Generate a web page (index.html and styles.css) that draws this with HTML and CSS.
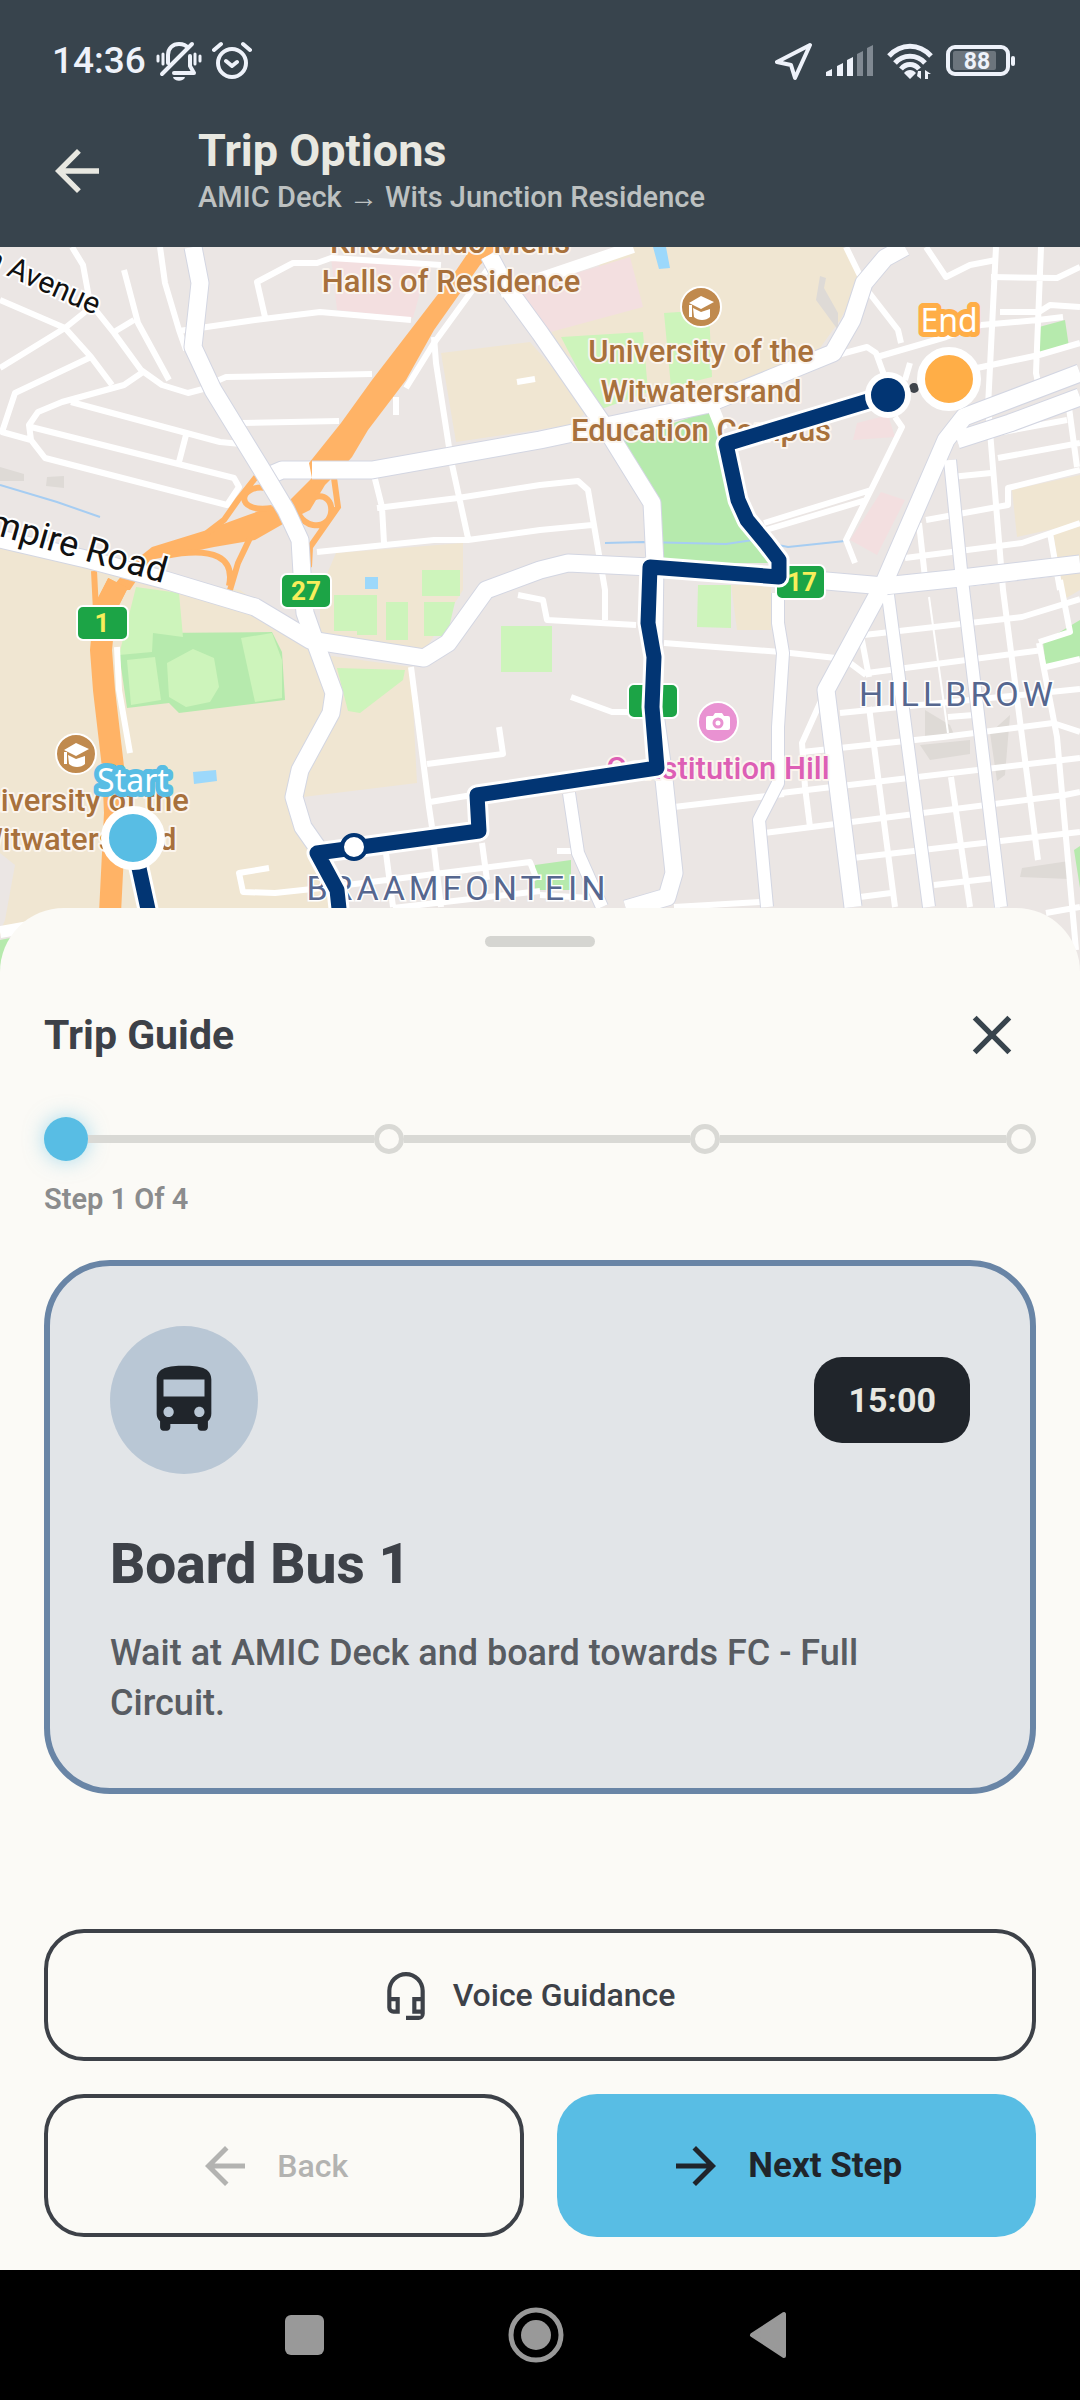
FILE: index.html
```html
<!DOCTYPE html>
<html lang="en">
<head>
    <meta charset="UTF-8">
    <meta name="viewport" content="width=device-width, initial-scale=1.0">
    <title>Trip Options</title>
    <link rel="stylesheet" href="styles.css">
</head>
<body>
    <header class="header">
        <div class="status-bar">
            <div class="status-group">
                <span class="clock">14:36</span>
                <svg class="status-icon" width="46" height="40" viewBox="0 0 46 40" fill="none" stroke="#eef2fa" stroke-width="4" stroke-linecap="round" stroke-linejoin="round">
                    <path d="M12 22V14C12 7 17 3 23 3c4 0 7 1 9 4M6 33L36 3M18 32h20l-4-7V15"/>
                    <path d="M2 15v5M7 13v10M39 13v10M44 15v5" stroke-width="3"/>
                    <path d="M17 36h12c-1 5-11 5-12 0z" fill="#eef2fa" stroke="none"/>
                </svg>
                <svg class="status-icon" width="40" height="40" viewBox="0 0 40 40" fill="none" stroke="#eef2fa" stroke-width="4" stroke-linecap="round" stroke-linejoin="round">
                    <circle cx="20" cy="22" r="14"/>
                    <path d="M14 20l6 5 5-4M2 9l7-6M38 9l-7-6"/>
                </svg>
            </div>
            <div class="status-group right">
                <svg width="38" height="40" viewBox="0 0 38 40" fill="none" stroke="#eef2fa" stroke-width="4" stroke-linejoin="round">
                    <path d="M35 4L2 21l14 3 4 13z"/>
                </svg>
                <svg width="48" height="40" viewBox="0 0 48 40" fill="#eef2fa">
                    <path d="M0 35v-4l6-3v7zM11 35V25l6-3v13zM21 35V19l6-3v19z"/>
                    <path d="M31 35V13l6-3v25zM41 35V7l6-3v31z" opacity=".4"/>
                </svg>
                <svg width="46" height="40" viewBox="0 0 46 40" fill="none" stroke="#eef2fa" stroke-width="5">
                    <path d="M2 15c12-13 30-13 42 0M8 22c8-9 22-9 30 0M14 28c5-6 13-6 18 0"/>
                    <path d="M17 32c3-4 9-4 12 0l-6 6zM31 30h3v8l-4-3zM38 38v-9l6 4h-3v5z" fill="#eef2fa" stroke="none"/>
                </svg>
                <svg class="battery" width="70" height="32" viewBox="0 0 70 32">
                    <rect x="2" y="2" width="60" height="27" rx="7" fill="none" stroke="#eef2fa" stroke-width="4"/>
                    <rect x="7" y="6" width="43" height="19" rx="2" fill="#6c757d"/>
                    <rect x="65" y="11" width="4" height="10" rx="2" fill="#eef2fa"/>
                    <text x="31" y="24" class="battery-level">88</text>
                </svg>
            </div>
        </div>
        <div class="app-bar">
            <button class="icon-button" type="button" aria-label="Go back">
                <svg width="66" height="66" viewBox="0 0 24 24" fill="#e8e8e1"><path d="M20 11H7.8l5.6-5.6L12 4l-8 8 8 8 1.4-1.4L7.8 13H20z"/></svg>
            </button>
            <div>
                <h1 class="title">Trip Options</h1>
                <p class="subtitle">AMIC Deck → Wits Junction Residence</p>
            </div>
        </div>
    </header>

    <main class="content">
        <section class="map" aria-label="Route map">
            <svg class="map-canvas" viewBox="0 247 1080 725" preserveAspectRatio="xMidYMin slice">
                <!-- land use -->
                <g class="campus">
                    <path d="M0 547l90 21 150 22 70 50 24 55-6 20-34 60 0 30 24 50 20 60v20H0z"/>
                    <path d="M325 655l86 12 6 116-114 14zM336 553l127-10v47l-38 60-105-10v-50zM441 353l89-11 60 68-20 15-114 17z"/>
                    <path d="M609 252l16-5h218l19 33-22 40-25 35-70 25-100 22-100-60zM1012 490l68-15v48l-63 14zM1053 530l27-10v70l-17 10zM731 585h40v45h-34z"/>
                </g>
                <path class="land" d="M0 853l15 12-10 55-5 12z"/>
                <g class="hospital">
                    <path d="M331 257l96 10-14 51-76-8zM520 290l110-33 13 50-96 26zM857 423l31-8 7 22-42 3zM881 492l24 8-28 55-27-15z"/>
                </g>
                <g class="pitch">
                    <path d="M561 337l82-5 5 60-49 18zM664 313l45-3 3 67-41 10zM698 585h33l0 43-34-1zM501 626h51v46h-51z"/>
                </g>
                <g class="park">
                    <path d="M624 440l88-30 7 37 28 76 27 40H664l-4-46zM1039 327l26-7 4 27-31 10zM1043 642l37-22v40l-34 7zM1074 850l6-4v42zM535 865l36-5v30h-36zM0 940l30-6v50H0z"/>
                    <path d="M119 653l33-6v-14l120-1 10 20 3 48-106 13-10-10-42 5z"/>
                </g>
                <g class="pitch">
                    <path d="M136 587l43 6 4 44-30-4-1 19-33 3zM127 660l28-3 6 43-30 5zM167 663l26-14 21 9 5 29-9 15-24 5-17-10zM241 638l31-5 10 27v38l-27 4z"/>
                    <path d="M334 595h43v40h-20v-4h-23zM386 602h22v38h-22zM422 570h38v26h-38zM424 602h31l-8 34h-23zM337 668l68 2-2 10-43 33-12-2z"/>
                </g>
                <g class="water">
                    <path d="M653 247h13l4 21-11 1zM365 577h13v12h-13zM193 772l23-2 1 11-23 3z"/>
                    <path class="stream" d="M0 485l57 17 43 15M605 543l38-1 83 2 27-4 35 7 57-6"/>
                </g>
                <g class="building">
                    <path d="M0 467l24 7v7H0zM47 477l17-1v12l-18-2zM820 276l6 2-2 10 14 25v17l-22-30zM925 710l25 15 5 12-30 4zM990 733l20-18-5 60-8 6zM920 745l50-5v14l-40 6zM1022 868l47-7v18l-49-2z"/>
                </g>

                <!-- side streets -->
                <g class="street">
                    <path d="M0 300l65 28 26 29 21 28M0 368l65-40 20-16M72 247l11 18 7 38 24 30 27 37 21 15 26 8 19-5M114 332l20-12M124 270l14 53 31 57M160 247l5 36 14 47 7 20"/>
                    <path d="M179 331l76-11 65-8 91 8M265 317l-8-35 36-19h24l14-5 110 7M143 372l-19 13-62 17-24 10-9 13 2 15 14 18 182 47 12-18-5-9-203-51M71 402l149 40 21 2M186 435l-7 27M91 357l-76 36-13 39 29 8"/>
                    <path d="M203 387l23-10 146-3M241 423l98-2M396 397v18M434 337l2 26 15 97 17 78M317 552l117-12h34l72-10 52-5M374 475l8 32 2 36M377 508l81-10 82-13 38-4 10 9 17 100v30M517 382l18-3M518 595l25 5 4 20 89 5"/>
                    <path d="M411 667l18 140 3 20M427 764l76-10-4-27M430 802l42-7M269 868l-30 5 4 19 32 1 56-6 199-25 7 18M386 853l7 54M434 847l7 60M482 843l5 37M571 697l41 15h18M393 908l147-17M557 851h17M540 895l50 3M674 907l86-5"/>
                    <path d="M664 643l117 9 55 6M674 807l110-13M840 713l240-24M802 752l141-15 110-14 27 9M781 793l299-35M764 833l301-38 15-3M853 858l227-26M934 885l61-7M860 897l31-4M948 717l26-2M864 635l158-18 58-18M867 673l176-23M1046 667l34-8"/>
                    <path d="M860 630l9 47M869 707l26 200M951 777l19 130M996 247l-8 160 15 183 35 270M1039 643l18 94 19 213M1060 580l10 52-31 10M829 683l-27 60 3 44 5 40M846 660l20 15M1046 913l34-6M995 878l2 30"/>
                    <path d="M926 247l20 30 24-12 26-5M1041 247l-5 126 3 14M991 277l66 1 23-11M1000 312h39l11-7 30 2M981 325l57-5 25-3M977 368l62-13 41-12M846 247l21 43 31 40 3 13M877 357l69-20 35-12M819 360l48-13 9 6 8 22M910 363l-5 17"/>
                    <path d="M895 417l7 10-31 63-25 50 9 23M764 523l107-33M766 530l100-30M951 477l40-4M998 458l82-15M960 440l107-20M926 520l82-15v-17l72-18M905 558l117-15 58-20M957 585l100-12M919 523l7 64M1050 533l10 57M1067 393l10 74"/>
                    <path class="lane" d="M929 597l19 136"/>
                </g>

                <!-- motorway -->
                <g class="main-road">
                    <path class="edge" d="M268 476l14-6h36"/>
                    <path d="M268 476l14-6h36"/>
                </g>
                <path class="edge-white" d="M117 647l2 43 11 63M498 255l-64 88-28 45"/>
                <path class="motorway" d="M472 247l-17 25-83 108-31 43-32 40 3 15-22 22-42 15-41 15-55 17-20 16-22 27h20l20-30 25-5 39-8 41-7 35-20 20-10 15-25 20-20 7-8 16-27 38-50 28-50 46-65 18-18z"/>
                <path class="motorway-line" d="M118 583l-13 25-4 42 3 40 9 77 2 46-5 100"/>
                <path class="ramp" d="M256 477l-18 23-14 20-17 13M266 488c-28-4-32 26 6 20M334 478l4 29-28 40-1 20M315 497c22-6 22 32-2 28-6-1-10-4-14-10M250 538l-12 25-8 27M165 556c50-10 70 2 64 30M94 571l2 40"/>

                <!-- main roads -->
                <g class="main-road">
                    <path class="edge" d="M193 247l7 36-7 64 20 43 49 80 24 40 14 30 3 50 2 23 12 34 17 46-3 20-31 57-6 27 9 30 14 20M312 470h60l168-30 165-35 69-28 59-24 19-33 12-37 21-25 20-11"/>
                    <path class="edge" d="M489 255l16 30 35 48 65 94 47 76 3 60-2 137 10 70 11 103-7 24-41 12M0 539l90 21 75 20 90 27 55 33 114 18 24-15 38-53 54-20 28-7 82 4 130 10 104 9 86-9 110-13"/>
                    <path class="edge" d="M1080 373l-116 44-18 23-62 143-58 107 27 217M957 440l53-17 70-26"/>
                    <path class="edge narrow" d="M778 593v30l5 30-5 74v56l-19 37 8 87M569 793l9 60 24 54M888 595l41 312M950 460l12 120 39 327"/>
                    <path d="M193 247l7 36-7 64 20 43 49 80 24 40 14 30 3 50 2 23 12 34 17 46-3 20-31 57-6 27 9 30 14 20M312 470h60l168-30 165-35 69-28 59-24 19-33 12-37 21-25 20-11"/>
                    <path d="M489 255l16 30 35 48 65 94 47 76 3 60-2 137 10 70 11 103-7 24-41 12M0 539l90 21 75 20 90 27 55 33 114 18 24-15 38-53 54-20 28-7 82 4 130 10 104 9 86-9 110-13"/>
                    <path d="M1080 373l-116 44-18 23-62 143-58 107 27 217M957 440l53-17 70-26"/>
                    <path class="narrow" d="M778 593v30l5 30-5 74v56l-19 37 8 87M569 793l9 60 24 54M888 595l41 312M950 460l12 120 39 327M500 292l133-45M0 932l40-7M712 405l10 25"/>
                </g>
                <path class="motorway-line" d="M118 583l-12 24"/>

                <!-- road shields -->
                <g class="shield">
                    <rect x="77" y="606" width="51" height="34" rx="6"/>
                    <rect x="281" y="574" width="50" height="34" rx="6"/>
                    <rect x="776" y="565" width="49" height="34" rx="6"/>
                    <rect x="628" y="684" width="50" height="34" rx="6"/>
                </g>
                <g class="shield-text">
                    <text x="102" y="632">1</text>
                    <text x="306" y="600">27</text>
                    <text x="802" y="591">17</text>
                </g>

                <!-- places -->
                <g class="place">
                    <text x="450" y="253">Knockando Mens</text>
                    <text x="451" y="292">Halls of Residence</text>
                    <text x="701" y="362">University of the</text>
                    <text x="701" y="402">Witwatersrand</text>
                    <text x="701" y="441">Education Campus</text>
                    <text x="76" y="811">University of the</text>
                    <text x="76" y="850">Witwatersrand</text>
                    <text class="attraction" x="718" y="779">Constitution Hill</text>
                </g>
                <g class="suburb">
                    <text x="958" y="706">HILLBROW</text>
                    <text x="458" y="900">BRAAMFONTEIN</text>
                </g>
                <text class="road-name" transform="translate(163 583) rotate(16)">Empire Road</text>
                <text class="road-name small" transform="translate(95 315) rotate(24)">Jan Avenue</text>

                <g class="poi">
                    <circle cx="701" cy="307" r="20"/>
                    <circle cx="76" cy="754" r="20"/>
                    <circle class="attraction" cx="718" cy="722" r="20"/>
                    <path d="M689 303l12-7 13 6-13 7zM693 308l8 4 9-3v8c-4 4-12 4-16 0zM689 305h3v12h-3z"/>
                    <path d="M64 750l12-7 13 6-13 7zM68 755l8 4 9-3v8c-4 4-12 4-16 0zM64 752h3v12h-3z"/>
                    <path d="M708 716h5l2-3h7l2 3h4q2 0 2 2v10q0 2-2 2h-20q-2 0-2-2v-10q0-2 2-2z"/>
                    <circle class="lens" cx="718" cy="723" r="4"/>
                </g>

                <!-- route -->
                <circle cx="914" cy="388" r="5" fill="#3f444b"/>
                <path class="route-edge" d="M133 838l6 30 12 55M340 918l-3-28-20-37 162-22-2-36 180-27-5-61 2-50-6-34 2-56 129 10v-17l-13-17-19-23-9-20-12-56 162-49"/>
                <path class="route" d="M133 838l6 30 12 55M340 918l-3-28-20-37 162-22-2-36 180-27-5-61 2-50-6-34 2-56 129 10v-17l-13-17-19-23-9-20-12-56 162-49"/>
                <circle cx="354" cy="847" r="12" fill="#fff" stroke="#023573" stroke-width="4"/>
                <circle cx="888" cy="395" r="20" fill="#023573" stroke="#fff" stroke-width="6"/>
                <circle cx="133" cy="838" r="28" fill="#58bde4" stroke="#fff" stroke-width="8"/>
                <circle cx="949" cy="379" r="28" fill="#ffae47" stroke="#fff" stroke-width="8"/>
                <text class="pin-label start" x="133" y="792">Start</text>
                <text class="pin-label end" x="949" y="332">End</text>
            </svg>
        </section>

        <section class="sheet">
            <div class="handle"></div>
            <div class="sheet-header">
                <h2 class="sheet-title">Trip Guide</h2>
                <button class="icon-button" type="button" aria-label="Close">
                    <svg width="66" height="66" viewBox="0 0 24 24" fill="#38444d"><path d="M19 6.4L17.6 5 12 10.6 6.4 5 5 6.4l5.6 5.6L5 17.6 6.4 19l5.6-5.6 5.6 5.6 1.4-1.4-5.6-5.6z"/></svg>
                </button>
            </div>

            <div class="progress">
                <span class="dot active"></span>
                <span class="line"></span>
                <span class="dot"></span>
                <span class="line"></span>
                <span class="dot"></span>
                <span class="line"></span>
                <span class="dot"></span>
            </div>
            <p class="step-count">Step 1 Of 4</p>

            <article class="card">
                <div class="card-top">
                    <div class="card-icon">
                        <svg width="82" height="82" viewBox="0 0 24 24" fill="#20252b"><path d="M4 16c0 .88.39 1.67 1 2.22V20c0 .55.45 1 1 1h1c.55 0 1-.45 1-1v-1h8v1c0 .55.45 1 1 1h1c.55 0 1-.45 1-1v-1.78c.61-.55 1-1.34 1-2.22V6c0-3.5-3.58-4-8-4s-8 .5-8 4v10zm3.5 1c-.83 0-1.5-.67-1.5-1.5S6.67 14 7.5 14s1.5.67 1.5 1.5S8.33 17 7.5 17zm9 0c-.83 0-1.5-.67-1.5-1.5s.67-1.5 1.5-1.5 1.5.67 1.5 1.5-.67 1.5-1.5 1.5zm1.5-6H6V6h12v5z"/></svg>
                    </div>
                    <time class="time">15:00</time>
                </div>
                <h3 class="card-title">Board Bus 1</h3>
                <p class="card-text">Wait at AMIC Deck and board towards FC - Full Circuit.</p>
            </article>

            <div class="actions">
                <button class="button voice" type="button">
                    <svg width="50" height="50" viewBox="0 0 24 24" fill="#3d4148"><path d="M12 1a9 9 0 0 0-9 9v8a3 3 0 0 0 3 3h3v-8H5v-3a7 7 0 0 1 14 0v3h-4v8h4v1h-7v2h6a3 3 0 0 0 3-3V10a9 9 0 0 0-9-9zM7 15v4H6a1 1 0 0 1-1-1v-3zm12 4h-2v-4h2z"/></svg>
                    Voice Guidance
                </button>
                <button class="button back" type="button" disabled>
                    <svg width="60" height="60" viewBox="0 0 24 24" fill="#b3b3b1"><path d="M20 11H7.8l5.6-5.6L12 4l-8 8 8 8 1.4-1.4L7.8 13H20z"/></svg>
                    Back
                </button>
                <button class="button next" type="button">
                    <svg width="60" height="60" viewBox="0 0 24 24" fill="#20252b"><path d="M12 4l-1.4 1.4 5.6 5.6H4v2h12.2l-5.6 5.6L12 20l8-8z"/></svg>
                    Next Step
                </button>
            </div>
        </section>
    </main>

    <nav class="nav-bar" aria-label="System">
        <button class="nav-button" type="button" aria-label="Recent apps">
            <svg width="60" height="60" viewBox="0 0 60 60"><rect x="11" y="10" width="39" height="40" rx="6" fill="#999"/></svg>
        </button>
        <button class="nav-button" type="button" aria-label="Home">
            <svg width="60" height="60" viewBox="0 0 60 60"><circle cx="30" cy="30" r="25" fill="none" stroke="#999" stroke-width="5"/><circle cx="30" cy="30" r="15" fill="#999"/></svg>
        </button>
        <button class="nav-button" type="button" aria-label="Back">
            <svg width="60" height="60" viewBox="0 0 60 60"><path d="M14 30l32-21v42z" fill="#999" stroke="#999" stroke-width="4" stroke-linejoin="round"/></svg>
        </button>
    </nav>
</body>
</html>
```
FILE: styles.css
```css
* {
    box-sizing: border-box;
}
body {
    display: flex;
    flex-direction: column;
    min-height: 100vh;
    margin: 0;
    font-family: Roboto, sans-serif;
    background-color: #fbfaf6;
    color: #3d4148;
}
h1, h2, h3, p {
    margin: 0;
}
button {
    font-family: inherit;
    cursor: pointer;
}
svg {
    display: block;
}

/* Header */
.header {
    background-color: #38444d;
    color: #e8e8e1;
    padding-bottom: 30px;
}
.status-bar {
    display: flex;
    justify-content: space-between;
    padding: 40px 64px 0 52px;
}
.status-group {
    display: flex;
    align-items: center;
    gap: 10px;
    height: 42px;
}
.status-group.right {
    gap: 13px;
}
.clock {
    font-size: 37px;
    line-height: 44px;
    font-weight: 500;
    color: #eef2fa;
}
.battery-level {
    font-size: 23px;
    font-weight: 700;
    fill: #eef2fa;
    text-anchor: middle;
}
.app-bar {
    display: flex;
    align-items: center;
    gap: 88px;
    padding: 43px 44px 0;
}
.icon-button {
    padding: 0;
    border: none;
    background: none;
}
.title {
    font-size: 45px;
    line-height: 52px;
    font-weight: 700;
}
.subtitle {
    font-size: 29px;
    line-height: 40px;
    font-weight: 500;
    color: #bdc1c1;
}

/* Map */
.content {
    display: flex;
    flex-direction: column;
    flex: 1;
}
.map {
    background-color: #ebe6e4;
}
.map-canvas {
    width: 100%;
}
.land {
    fill: #ebe6e4;
}
.campus {
    fill: #f0e6d2;
}
.hospital {
    fill: #f3dfe0;
}
.pitch {
    fill: #cdf4bb;
}
.park {
    fill: #b6eaad;
}
.water {
    fill: #9cd8fb;
}
.stream {
    fill: none;
    stroke: #a6cdf2;
    stroke-width: 2;
}
.building {
    fill: #dedad6;
}
.street {
    fill: none;
    stroke: #fff;
    stroke-width: 6;
    stroke-linejoin: round;
}
.street .lane {
    stroke-width: 2;
}
.main-road {
    fill: none;
    stroke: #fff;
    stroke-width: 17;
    stroke-linejoin: round;
}
.main-road .edge {
    stroke: #d3d6e2;
    stroke-width: 19;
}
.main-road .narrow {
    stroke-width: 12;
}
.main-road .edge.narrow {
    stroke-width: 14;
}
.edge-white {
    fill: none;
    stroke: #fff;
    stroke-width: 6;
}
.motorway {
    fill: #ffb366;
}
.motorway-line {
    fill: none;
    stroke: #ffb366;
    stroke-width: 22;
    stroke-linejoin: round;
}
.ramp {
    fill: none;
    stroke: #ffb366;
    stroke-width: 6;
}
.shield {
    fill: #1ca446;
    stroke: #fff;
    stroke-width: 2;
}
.shield-text {
    font-size: 26px;
    font-weight: 700;
    fill: #f7ee5b;
    text-anchor: middle;
}
.place {
    font-size: 31px;
    font-weight: 500;
    fill: #a8713c;
    stroke: #fbf5ee;
    stroke-width: 4;
    stroke-linejoin: round;
    paint-order: stroke;
    text-anchor: middle;
}
.place .attraction {
    fill: #dd5fb5;
}
.suburb {
    font-size: 34px;
    letter-spacing: 4px;
    fill: #56678f;
    stroke: #fff;
    stroke-width: 3;
    paint-order: stroke;
    text-anchor: middle;
}
.road-name {
    font-size: 36px;
    fill: #111;
    stroke: #fff;
    stroke-width: 4;
    paint-order: stroke;
    text-anchor: end;
}
.road-name.small {
    font-size: 30px;
}
.poi {
    fill: #fff;
}
.poi circle {
    fill: #c08a4e;
    stroke: #fff;
    stroke-width: 2;
}
.poi circle.attraction {
    fill: #e992d2;
}
.poi circle.lens {
    fill: #fff;
    stroke: #e992d2;
    stroke-width: 3;
}
.route, .route-edge {
    fill: none;
    stroke: #023573;
    stroke-width: 15;
    stroke-linejoin: round;
}
.route-edge {
    stroke: #fff;
    stroke-width: 21;
}
.pin-label {
    font-family: "Noto Sans", sans-serif;
    font-size: 32px;
    fill: #fff;
    stroke-width: 10;
    stroke-linejoin: round;
    paint-order: stroke;
    text-anchor: middle;
}
.pin-label.start {
    stroke: #58bde4;
}
.pin-label.end {
    stroke: #ffae47;
}

/* Bottom sheet */
.sheet {
    display: flex;
    flex-direction: column;
    flex: 1;
    margin-top: -64px;
    padding: 28px 44px 33px;
    border-radius: 64px 64px 0 0;
    background-color: #fbfaf6;
    position: relative;
}
.handle {
    align-self: center;
    width: 110px;
    height: 11px;
    border-radius: 6px;
    background-color: #d5d5d1;
}
.sheet-header {
    display: flex;
    align-items: center;
    justify-content: space-between;
    padding: 55px 11px 0 0;
}
.sheet-title {
    font-size: 41px;
    line-height: 48px;
    font-weight: 700;
}
.progress {
    display: flex;
    align-items: center;
    padding-top: 49px;
}
.dot {
    width: 30px;
    height: 30px;
    border: 5px solid #d9d9d5;
    border-radius: 50%;
}
.dot.active {
    width: 44px;
    height: 44px;
    border: none;
    background-color: #58bde4;
    box-shadow: 0 0 20px rgba(88, 189, 228, 0.5);
}
.line {
    flex: 1;
    height: 8px;
    background-color: #d9d9d5;
}
.step-count {
    margin-top: 20px;
    font-size: 29px;
    line-height: 36px;
    font-weight: 600;
    color: #8b8c8d;
}
.card {
    margin-top: 43px;
    padding: 60px;
    border: 6px solid #6985a6;
    border-radius: 66px;
    background-color: #e2e5e8;
}
.card-top {
    display: flex;
    align-items: center;
    justify-content: space-between;
}
.card-icon {
    display: flex;
    align-items: center;
    justify-content: center;
    width: 148px;
    height: 148px;
    border-radius: 50%;
    background-color: #b9c7d5;
}
.time {
    padding: 24px 34px;
    border-radius: 28px;
    background-color: #20252b;
    color: #e8e8e1;
    font-size: 34px;
    line-height: 38px;
    font-weight: 700;
}
.card-title {
    margin-top: 58px;
    font-size: 55px;
    line-height: 64px;
    font-weight: 800;
}
.card-text {
    margin-top: 32px;
    font-size: 36px;
    line-height: 50px;
    font-weight: 500;
    color: #585c62;
}
.actions {
    display: grid;
    grid-template-columns: 1fr 1fr;
    gap: 33px;
    margin-top: auto;
    padding-top: 44px;
}
.button {
    display: flex;
    align-items: center;
    justify-content: center;
    gap: 22px;
    height: 143px;
    padding: 0 24px 0 0;
    border: 4px solid #3d4148;
    border-radius: 40px;
    background: none;
    color: #3d4148;
    font-size: 32px;
    font-weight: 500;
}
.button.voice {
    grid-column: 1 / -1;
    height: 132px;
}
.button.back {
    color: #b3b3b1;
    cursor: default;
}
.button.next {
    border: none;
    background-color: #58bde4;
    color: #20252b;
    font-size: 35px;
    font-weight: 700;
}

/* System navigation */
.nav-bar {
    display: flex;
    align-items: center;
    justify-content: center;
    gap: 172px;
    height: 130px;
    padding-right: 8px;
    background-color: #000;
}
.nav-button {
    padding: 0;
    border: none;
    background: none;
}
```
